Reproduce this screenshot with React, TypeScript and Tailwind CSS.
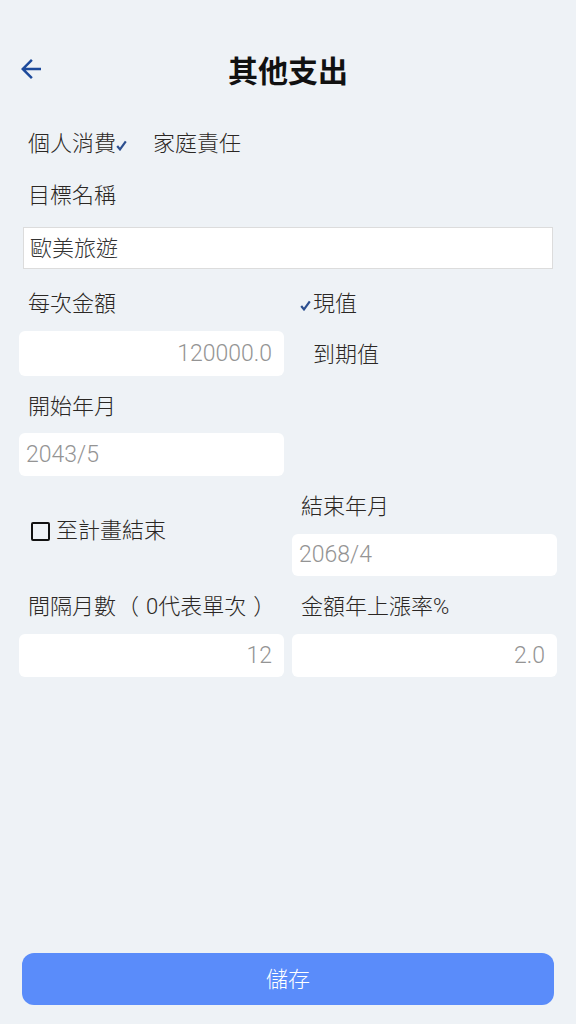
import { MdArrowBack } from 'react-icons/md';

function Check({ hidden }: { hidden?: boolean }) {
  return (
    <svg
      width="11"
      height="11"
      viewBox="0 0 11 11"
      className={hidden ? 'invisible shrink-0' : 'shrink-0'}
    >
      <path d="M1.2 6 L4 9.4 L9.8 1.4" fill="none" stroke="#2c4f8f" strokeWidth="2.2" />
    </svg>
  );
}

function Field({ value, align = 'right', h = 'h-[43px]' }: { value: string; align?: 'left' | 'right'; h?: string }) {
  return (
    <div
      className={`${h} bg-white rounded-[6px] flex items-center text-[23px] font-light text-[#949494] ${
        align === 'right' ? 'justify-end pr-[12px]' : 'justify-start pl-[7px]'
      }`}
    >
      {value}
    </div>
  );
}

export default function App() {
  return (
    <div className="w-[576px] h-[1024px] bg-[#eef2f6] flex flex-col font-light text-[#2b2724] font-[family-name:Roboto,'Noto_Sans_CJK_TC',sans-serif]">
      {/* Header */}
      <div className="mt-[44px] h-[56px] grid grid-cols-[1fr_auto_1fr] items-center">
        <div className="pl-[16px] -mt-[6px]">
          <MdArrowBack size={30} className="text-[#1d4a9b]" />
        </div>
        <h1 className="text-[30px] font-bold leading-[56px] text-[#111]">其他支出</h1>
        <div />
      </div>

      {/* Category */}
      <div className="mt-[29px] h-[30px] flex items-center pl-[28px] text-[22px] leading-[30px]">
        <span>個人消費</span>
        <span className="mt-[2px]">
          <Check />
        </span>
        <span className="ml-[26px]">家庭責任</span>
      </div>

      {/* Name */}
      <div className="mt-[22px] h-[30px] pl-[28px] text-[22px] leading-[30px]">目標名稱</div>
      <div className="mt-[16px] mx-[23px] h-[42px] bg-white border border-[#dcdcdc] flex items-center pl-[6px] text-[22px] text-[#333]">
        歐美旅遊
      </div>

      <div className="px-[19px] grid grid-cols-2 gap-x-[8px] text-[22px] leading-[30px]">
        {/* amount */}
        <div className="mt-[20px] h-[30px] pl-[9px]">每次金額</div>
        <div className="mt-[20px] h-[30px] pl-[8px] flex items-center gap-[2px]">
          <span className="mt-[2px]">
            <Check />
          </span>
          <span>現值</span>
        </div>
        <div className="mt-[12px]">
          <Field value="120000.0" h="h-[45px]" />
        </div>
        <div className="mt-[12px] h-[45px] pl-[8px] flex items-center gap-[2px] pt-[3px]">
          <Check hidden />
          <span>到期值</span>
        </div>

        {/* start */}
        <div className="mt-[16px] h-[30px] pl-[9px]">開始年月</div>
        <div className="mt-[16px]" />
        <div className="mt-[11px]">
          <Field value="2043/5" align="left" />
        </div>
        <div className="mt-[11px]" />

        {/* end */}
        <div className="mt-[16px] pt-[24px] pl-[12px]">
          <div className="h-[30px] flex items-center gap-[6px]">
            <span className="w-[19px] h-[19px] border-[2.5px] border-[#111] rounded-[2px] shrink-0" />
            <span>至計畫結束</span>
          </div>
        </div>
        <div className="mt-[16px]">
          <div className="h-[30px] pl-[9px]">結束年月</div>
          <div className="mt-[12px]">
            <Field value="2068/4" align="left" h="h-[42px]" />
          </div>
        </div>

        {/* interval / growth */}
        <div className="mt-[16px] h-[30px] pl-[9px] whitespace-nowrap flex">
          <span>間隔月數</span>
          <span className="pl-[1px] pr-[7px]">（</span>
          <span>0代表單次</span>
          <span className="pl-[7px] pr-[1px]">）</span>
        </div>
        <div className="mt-[16px] h-[30px] pl-[9px]">金額年上漲率%</div>
        <div className="mt-[12px]">
          <Field value="12" />
        </div>
        <div className="mt-[12px]">
          <Field value="2.0" />
        </div>
      </div>

      <button className="mt-auto mx-[22px] mb-[19px] h-[52px] rounded-[12px] bg-[#5a8cfa] text-white text-[22px] font-light">
        儲存
      </button>
    </div>
  );
}
